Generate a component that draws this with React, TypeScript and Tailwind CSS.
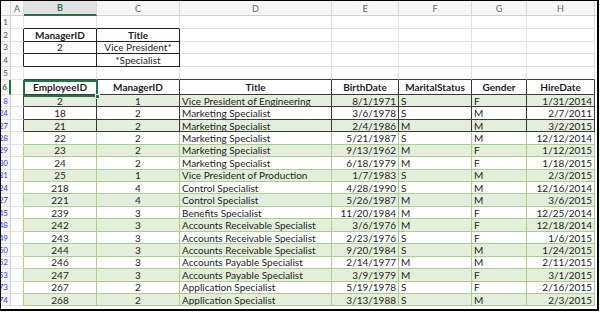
import React from 'react'

type Row = [string, string, string, string, string, string, string, string]

const rows: Row[] = [
  ['8', '2', '1', 'Vice President of Engineering', '8/1/1971', 'S', 'F', '1/31/2014'],
  ['24', '18', '2', 'Marketing Specialist', '3/6/1978', 'S', 'M', '2/7/2011'],
  ['27', '21', '2', 'Marketing Specialist', '2/4/1986', 'M', 'M', '3/2/2015'],
  ['28', '22', '2', 'Marketing Specialist', '5/21/1987', 'S', 'M', '12/12/2014'],
  ['29', '23', '2', 'Marketing Specialist', '9/13/1962', 'M', 'F', '1/12/2015'],
  ['30', '24', '2', 'Marketing Specialist', '6/18/1979', 'M', 'F', '1/18/2015'],
  ['31', '25', '1', 'Vice President of Production', '1/7/1983', 'S', 'M', '2/3/2015'],
  ['124', '218', '4', 'Control Specialist', '4/28/1990', 'S', 'M', '12/16/2014'],
  ['127', '221', '4', 'Control Specialist', '5/26/1987', 'M', 'M', '3/6/2015'],
  ['145', '239', '3', 'Benefits Specialist', '11/20/1984', 'M', 'F', '12/25/2014'],
  ['148', '242', '3', 'Accounts Receivable Specialist', '3/6/1976', 'M', 'F', '12/18/2014'],
  ['149', '243', '3', 'Accounts Receivable Specialist', '2/23/1976', 'S', 'F', '1/6/2015'],
  ['150', '244', '3', 'Accounts Receivable Specialist', '9/20/1984', 'S', 'M', '1/24/2015'],
  ['152', '246', '3', 'Accounts Payable Specialist', '2/14/1977', 'M', 'M', '2/11/2015'],
  ['153', '247', '3', 'Accounts Payable Specialist', '3/9/1979', 'M', 'F', '3/1/2015'],
  ['173', '267', '2', 'Application Specialist', '5/19/1978', 'S', 'F', '2/16/2015'],
  ['174', '268', '2', 'Application Specialist', '3/13/1988', 'S', 'M', '2/3/2015'],
]

const widths = ['w-[10px]', 'w-[13px]', 'w-[73px]', 'w-[83px]', 'w-[152px]', 'w-[67px]', 'w-[73px]', 'w-[55px]', 'w-[68px]']

const grid = 'border-r border-b border-[#e2e2e2]'
const dark = 'border-r border-b border-[#3a3a3a]'
const green = 'border-r border-b border-[#a8d08d]'

// row numbers are cut off at the left edge of the window, as in the sheet
function RowHead({ label, blue, active }: { label: string; blue?: boolean; active?: boolean }) {
  return (
    <div
      className={`w-[10px] shrink-0 overflow-hidden flex items-center justify-end pr-[2px] text-[8px] bg-[#f6f6f6] border-b border-[#e2e2e2] ${
        active ? 'border-r-2 border-r-[#217346] text-[#217346] bg-[#e1e1e1]' : 'border-r border-r-[#cfcfcf]'
      } ${blue ? 'text-[#3b3bf5]' : active ? '' : 'text-[#555]'}`}
    >
      <span className="whitespace-nowrap">{label}</span>
    </div>
  )
}

export default function App() {
  return (
    <div className="w-[600px] h-[313px] bg-white overflow-hidden" style={{ fontFamily: 'Lato, "Liberation Sans", sans-serif' }}>
      <div className="relative w-[599px] h-[311px] border-l border-t border-r-2 border-b-2 border-black text-[10px] text-[#1e1e1e] leading-none">
        {/* column letters */}
        <div className="flex h-[15px]">
          <div className="w-[10px] shrink-0 bg-[#f6f6f6] border-r border-b border-[#cfcfcf]" />
          {['A', 'B', 'C', 'D', 'E', 'F', 'G', 'H'].map((c, i) => (
            <div
              key={c}
              className={`${widths[i + 1]} shrink-0 flex items-center justify-center text-[9px] border-r border-[#dadada] ${
                c === 'B'
                  ? 'bg-[#e1e1e1] text-[#217346] font-bold border-b-2 border-b-[#217346]'
                  : 'bg-[#f6f6f6] text-[#666] border-b border-b-[#cfcfcf]'
              }`}
            >
              {c}
            </div>
          ))}
          <div className="flex-1 bg-[#f6f6f6] border-b border-[#cfcfcf]" />
        </div>

        {/* rows 1-5 */}
        {[1, 2, 3, 4, 5].map((r) => {
          const inBox = r >= 2 && r <= 4
          const top = r === 1
          const cells: [string, string][] =
            r === 2 ? [['ManagerID', 'Title']] : r === 3 ? [['2', 'Vice President*']] : r === 4 ? [['', '*Specialist']] : [['', '']]
          return (
            <div key={r} className="flex h-[12.8px]">
              <RowHead label={String(r)} />
              <div className={`w-[13px] shrink-0 border-b border-[#e2e2e2] border-r ${inBox ? 'border-r-[#222]' : 'border-r-[#e2e2e2]'}`} />
              <div
                className={`w-[73px] shrink-0 flex items-center justify-center ${
                  inBox || top ? 'border-r border-b border-[#222]' : r === 5 ? 'border-r border-r-[#e2e2e2] border-b border-b-[#3a3a3a]' : grid
                } ${top ? 'border-r-[#e2e2e2]' : ''} ${r === 2 ? 'font-bold' : ''}`}
              >
                {cells[0][0]}
              </div>
              <div
                className={`w-[83px] shrink-0 flex items-center justify-center ${
                  inBox || top ? 'border-r border-b border-[#222]' : r === 5 ? 'border-r border-r-[#e2e2e2] border-b border-b-[#3a3a3a]' : grid
                } ${top ? 'border-r-[#e2e2e2]' : ''} ${r === 2 ? 'font-bold' : ''}`}
              >
                {cells[0][1]}
              </div>
              {widths.slice(4).map((w, i) => (
                <div
                  key={i}
                  className={`${w} shrink-0 border-r border-r-[#e2e2e2] border-b ${r === 5 ? 'border-b-[#3a3a3a]' : 'border-b-[#e2e2e2]'}`}
                />
              ))}
              <div className="flex-1" />
            </div>
          )
        })}

        {/* row 6 header */}
        <div className="flex h-[15px] font-bold">
          <RowHead label="6" active />
          <div className="w-[13px] shrink-0 border-r border-r-[#3a3a3a] border-b border-b-[#e2e2e2]" />
          {['EmployeeID', 'ManagerID', 'Title', 'BirthDate', 'MaritalStatus', 'Gender', 'HireDate'].map((h, i) => (
            <div key={h} className={`${widths[i + 2]} shrink-0 flex items-center justify-center ${dark}`}>
              {h}
            </div>
          ))}
          <div className="flex-1" />
        </div>

        {/* data rows */}
        {rows.map((r, idx) => {
          const b = idx < 3 ? dark : green
          const bg = idx % 2 === 0 ? 'bg-[#e3efda]' : 'bg-white'
          return (
            <div key={r[0]} className="flex h-[12.45px]">
              <RowHead label={r[0]} blue />
              <div className={`w-[13px] shrink-0 border-b border-b-[#e2e2e2] border-r ${idx < 3 ? 'border-r-[#3a3a3a]' : 'border-r-[#a8d08d]'}`} />
              <div className={`w-[73px] shrink-0 flex items-center justify-center ${b} ${bg}`}>{r[1]}</div>
              <div className={`w-[83px] shrink-0 flex items-center justify-center ${b} ${bg}`}>{r[2]}</div>
              <div className={`w-[152px] shrink-0 flex items-center pl-[2px] whitespace-nowrap overflow-hidden ${b} ${bg}`}>{r[3]}</div>
              <div className={`w-[67px] shrink-0 flex items-center justify-end pr-[2px] ${b} ${bg}`}>{r[4]}</div>
              <div className={`w-[73px] shrink-0 flex items-center pl-[2px] ${b} ${bg}`}>{r[5]}</div>
              <div className={`w-[55px] shrink-0 flex items-center pl-[2px] ${b} ${bg}`}>{r[6]}</div>
              <div className={`w-[68px] shrink-0 flex items-center justify-end pr-[2px] ${b} ${bg}`}>{r[7]}</div>
              <div className="flex-1" />
            </div>
          )
        })}

        {/* active cell B6 */}
        <div className="absolute left-[22px] top-[79px] w-[75px] h-[17px] border-2 border-[#217346] pointer-events-none">
          <div className="absolute -right-[4px] -bottom-[4px] w-[5px] h-[5px] bg-[#217346] border border-white" />
        </div>
      </div>
    </div>
  )
}
